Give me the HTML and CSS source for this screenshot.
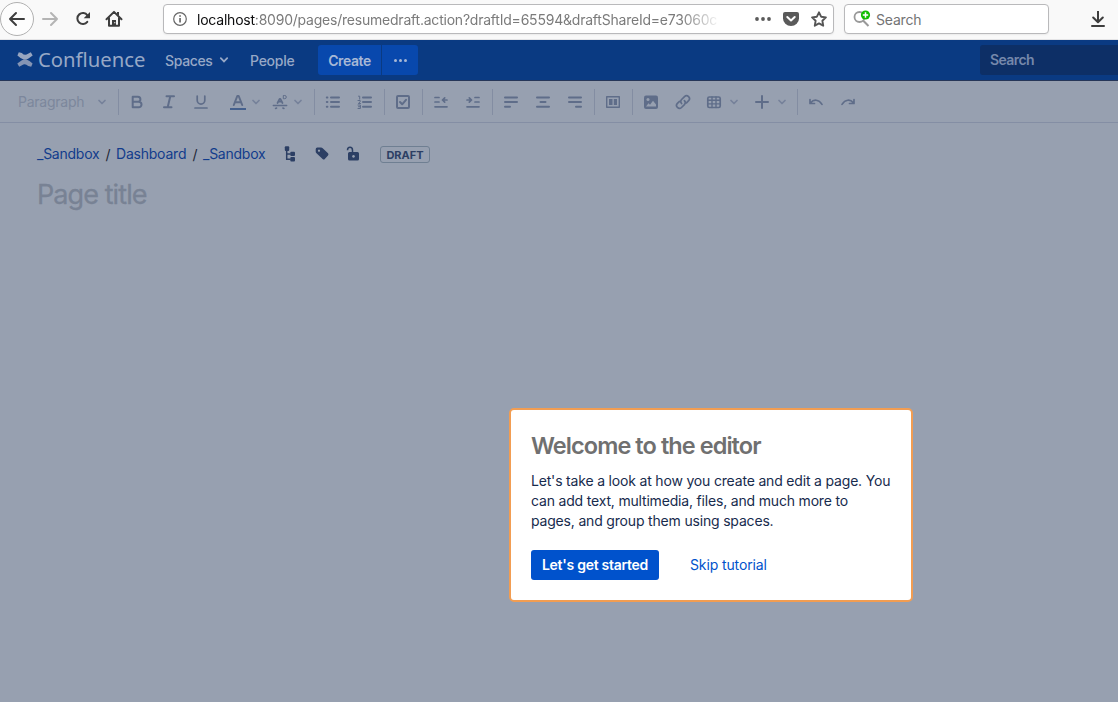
FILE: index.html
```html
<!DOCTYPE html>
<html lang="en">
<head>
<meta charset="utf-8">
<title>Confluence</title>
<link rel="stylesheet" href="styles.css">
</head>
<body>
<div class="browser">
  <span class="back"><svg width="18" height="18" viewBox="0 0 18 18"><path d="M8 3L2 9l6 6M2 9h14" class="b2"/></svg></span>
  <svg class="forward" width="18" height="18" viewBox="0 0 18 18"><path d="M10 3l6 6-6 6M16 9H2"/></svg>
  <svg class="reload" width="16" height="16" viewBox="0 0 16 16"><path d="M12.400 4.400A5.500 5.500 0 1 0 12.300 10.800" class="b2"/><path d="M15 1v6.300H8.700z" fill="#3e3e3e"/></svg>
  <svg class="home" width="18" height="18" viewBox="0 0 18 18"><path d="M1.500 9.200L9 1.900l7.500 7.300M4 8v7.800h10V8" class="b2"/><path d="M12 2h2v4l-2-2zM7 10h4v5H7z" fill="#3e3e3e"/><path d="M9.300 12h1v1.200h-1z" fill="#f9f9f9"/></svg>
  <div class="urlbar">
    <svg width="14" height="14" viewBox="0 0 14 14"><circle cx="7" cy="7" r="6.300" fill="none" stroke="#666" stroke-width="1.200"/><path d="M6.300 6h1.500v4.500H6.300zM6.300 3.300h1.500v1.500H6.300z" fill="#555"/></svg>
    <div class="url"><span class="host">localhost</span>:8090/pages/resumedraft.action?draftId=65594&amp;draftShareId=e73060c</div>
    <svg class="more" width="16" height="16" viewBox="0 0 16 16" fill="#5a5a5a"><circle cx="2" cy="8" r="1.900"/><circle cx="8" cy="8" r="1.900"/><circle cx="14" cy="8" r="1.900"/></svg>
    <svg class="pocket" width="16" height="16" viewBox="0 0 16 16"><path d="M2 1h12q2 0 2 2v4.500a8 7.500 0 0 1-16 0V3q0-2 2-2z" fill="#5a5a5a"/><path d="M4.300 6L8 9.500 11.700 6" fill="none" stroke="#fff" stroke-width="2" stroke-linecap="round" stroke-linejoin="round"/></svg>
    <svg class="star" width="16" height="16" viewBox="0 0 16 16"><path d="M8 1.300l2.100 4.400 4.800.7-3.500 3.400.8 4.900L8 12.400l-4.200 2.300.8-4.900L1.100 6.400l4.800-.7z" fill="none" stroke="#555" stroke-width="1.900" stroke-linejoin="round"/></svg>
  </div>
  <div class="finder">
    <svg width="18" height="18" viewBox="0 0 18 18"><circle cx="6.500" cy="7" r="5" fill="none" stroke="#999" stroke-width="1.800"/><path d="M10.300 10.700l5.200 5.300" stroke="#999" stroke-width="2"/><circle cx="12.500" cy="5" r="4.600" fill="#12bc00"/><path d="M12.500 2.300v5.400M9.800 5h5.400" stroke="#fff" stroke-width="1.500"/></svg>
    <span>Search</span>
  </div>
  <svg class="download" width="14" height="16" viewBox="0 0 14 16"><path d="M7 0v11M2.200 6.500L7 11.300l4.800-4.800M1 15h12" class="b2"/></svg>
</div>

<div class="header">
  <svg class="mark" width="16" height="15" viewBox="0 0 16 15"><path d="M1.800.3L4.800 1Q8 4.300 11 1.700L13.800.3l1.900 3.200Q9.500 8.600 6.500 7.600 3.500 6.500.4 3.600z" fill="#97a5c0"/><path d="M14.200 14.700l-3-.7Q8 10.700 5 13.300l-2.800 1.400L.3 11.500Q6.500 6.400 9.500 7.400q3 1.100 6.100 4z" fill="#8494b4"/></svg>
  <span class="brand">Confluence</span>
  <span class="nav spaces">Spaces</span>
  <svg class="navchev" width="10" height="8" viewBox="0 0 10 8"><path d="M1.800 2.200L5 5.400l3.200-3.200"/></svg>
  <span class="nav people">People</span>
  <span class="create"><b>Create</b></span>
  <span class="dots"><i></i><i></i><i></i></span>
  <span class="quick"><b>Search</b></span>
</div>

<div class="toolbar">
  <div class="para"><span>Paragraph</span><svg class="chev" width="10" height="8" viewBox="0 0 10 8"><path d="M2 2.500l3 3 3-3"/></svg></div>
  <div class="group">
    <span class="tool"><svg class="ic" viewBox="0 0 16 16"><path d="M3.700 2.700h5.200a2.400 2.400 0 0 1 0 5H3.700zM3.700 7.700h6a2.800 2.800 0 0 1 0 5.600h-6z" class="s2"/></svg></span>
    <span class="tool"><svg class="ic" viewBox="0 0 16 16"><path d="M5.500 2.300H13M3 13.300h7.500M9.300 2.300l-2.600 11" class="s2"/></svg></span>
    <span class="tool"><svg class="ic" viewBox="0 0 16 16"><path d="M4.200 2v4.300a3.800 3.800 0 0 0 7.600 0V2M2 14h12" class="s17"/></svg></span>
    <span class="drop color"><svg class="ic" viewBox="0 0 16 16"><path d="M3.800 11L7.300 2h1.400L12.200 11M5 8.200h6" class="s2"/><path d="M0 15h16" stroke="#45608d" stroke-width="2"/></svg><svg class="chev" width="8" height="8" viewBox="0 0 8 8"><path d="M1 2.500l3 3 3-3"/></svg></span>
    <span class="drop fmt"><svg class="ic" viewBox="0 0 16 16"><path d="M5.500 9L7.600 4.800h.8L10.500 9M6.500 7.700h3" class="s17"/><path d="M1.300 11.500h13.400M3.500 14.500l1.200-.5M12 14.500l-1.200-.5" class="s14"/><path d="M11.700 1.500h1a1.500 1.500 0 0 1 0 3.200h-1z" class="s1"/></svg><svg class="chev" width="8" height="8" viewBox="0 0 8 8"><path d="M1 2.500l3 3 3-3"/></svg></span>
  </div>
  <div class="group">
    <span class="tool"><svg class="ic" viewBox="0 0 16 16"><path d="M1.800 3.500h.6M1.800 8h.6M1.800 12.800h.6M6 3.500h8M6 8h8M6 12.800h8" class="s2"/></svg></span>
    <span class="tool"><svg class="ic" viewBox="0 0 16 16"><path d="M6 3.500h8M6 8h8M6 12.800h8" class="s2"/><path d="M1.500 2.200h1.200v3M1 6.500h2.200v1.300L1.300 9.500h2.200M1 11h2.400v3.500H1M1.500 12.700h1.900" class="s1"/></svg></span>
  </div>
  <div class="group">
    <span class="tool"><svg class="ic" viewBox="0 0 16 16"><rect x="2" y="2" width="12" height="12" rx="1" class="s2"/><path d="M5 8l2.200 2.300L11 5.800" class="s2"/></svg></span>
  </div>
  <div class="group">
    <span class="tool"><svg class="ic" viewBox="0 0 16 16"><path d="M2 3.500h4M2 8h4M2 12.800h12M9.500 6H14M11.700 3.900L9.500 6l2.200 2.100" class="s17"/></svg></span>
    <span class="tool"><svg class="ic" viewBox="0 0 16 16"><path d="M10 3.500h4M10 8h4M2 12.800h12M2 6h4.500M4.300 3.900L6.500 6 4.300 8.100" class="s17"/></svg></span>
  </div>
  <div class="group">
    <span class="tool"><svg class="ic" viewBox="0 0 16 16"><path d="M2 3.500h12M2 8h12M2 12.800h5" class="s2"/></svg></span>
    <span class="tool"><svg class="ic" viewBox="0 0 16 16"><path d="M2 3.500h12M5.500 8h5M2 12.800h12" class="s2"/></svg></span>
    <span class="tool"><svg class="ic" viewBox="0 0 16 16"><path d="M2 3.500h12M2 8h12M9 12.800h5" class="s2"/></svg></span>
  </div>
  <div class="group">
    <span class="tool"><svg class="ic" viewBox="0 0 16 16"><rect x="1.700" y="2.700" width="12.600" height="10.600" class="s14"/><path d="M4 5h3.500v6H4zM8.800 5H12v6H8.800z" class="f"/></svg></span>
  </div>
  <div class="group">
    <span class="tool"><svg class="ic" viewBox="0 0 16 16"><rect x="1" y="1.500" width="14" height="13.500" rx="2" class="f"/><circle cx="5" cy="5.500" r="1.500" class="hole"/><path d="M3 12.500l2.500-3.200 1.500 1.500 3-4 3 3.700v2z" class="hole"/></svg></span>
    <span class="tool"><svg class="ic" viewBox="0 0 16 16"><path d="M6.600 9.500a3 3 0 0 1 0-4L9.500 2.600a2.900 2.900 0 0 1 4.100 4.100L11.500 8.800M9.400 6.600a3 3 0 0 1 0 4L6.500 13.500a2.900 2.900 0 0 1-4.100-4.100L4.500 7.300" class="s17"/></svg></span>
    <span class="drop table"><svg class="ic" viewBox="0 0 16 16"><rect x="1.800" y="3" width="12.400" height="10.500" rx="1.500" class="s17"/><path d="M2 6.300h12M2 9.900h12M6 3v10.500M10 3v10.500" class="s14"/></svg><svg class="chev" width="8" height="8" viewBox="0 0 8 8"><path d="M1 2.500l3 3 3-3"/></svg></span>
    <span class="drop plus"><svg class="ic" viewBox="0 0 16 16"><path d="M8 2v12M2 8h12" class="s2"/></svg><svg class="chev" width="8" height="8" viewBox="0 0 8 8"><path d="M1 2.500l3 3 3-3"/></svg></span>
  </div>
  <div class="group">
    <span class="tool"><svg class="ic" viewBox="0 0 16 16"><path d="M2.700 8.700c3-3.600 8-3.500 11.300 1.700M2 5.500v4h4.500" class="s17"/></svg></span>
    <span class="tool"><svg class="ic" viewBox="0 0 16 16"><path d="M13.300 8.700C10.300 5.100 5.300 5.200 2 10.400M14 5.500v4H9.500" class="s17"/></svg></span>
  </div>
</div>

<div class="page">
  <div class="crumbs">
    <a>_Sandbox</a><span class="slash">/</span><a>Dashboard</a><span class="slash">/</span><a>_Sandbox</a>
    <svg class="tree" width="16" height="16" viewBox="0 0 16 16"><rect x="2.800" y=".3" width="4.400" height="4.700" rx="1"/><rect x="8.300" y="5.700" width="4.700" height="4.400" rx="1"/><rect x="8.300" y="11" width="4.700" height="4.400" rx="1"/><path d="M4.700 4v9.300h4M4.700 8h4" class="line"/></svg>
    <svg class="tag" width="16" height="16" viewBox="0 0 16 16"><path fill-rule="evenodd" d="M3.300 1.500H7q1 0 1.700.7l5.300 5q1 1 0 2.200l-3.200 3.500q-1 1-2.200 0L2.500 7.200q-.8-.7-.8-1.700V3.200q0-1.700 1.600-1.700zM5 3.500a1.100 1.100 0 1 0 .01 0z"/></svg>
    <svg class="lock" width="16" height="16" viewBox="0 0 16 16"><path fill-rule="evenodd" d="M4.500 6h8q1.500 0 1.500 1.500V13q0 1.500-1.500 1.500h-8Q3 14.500 3 13V7.500Q3 6 4.500 6zM8.500 9a1.400 1.400 0 1 0 .01 0z"/><path d="M2.500 4.200c0-4 5-4 5 0v3" class="line"/></svg>
    <span class="draft">DRAFT</span>
  </div>
  <div class="title">Page title</div>
</div>

<div class="dialog">
  <h2>Welcome to the editor</h2>
  <p>Let's take a look at how you create and edit a page. You<br>can add text, multimedia, files, and much more to<br>pages, and group them using spaces.</p>
  <div class="actions"><span class="start"><b>Let's get started</b></span><a class="skip">Skip tutorial</a></div>
</div>
</body>
</html>
```
FILE: styles.css
```css
* { box-sizing: border-box; }
body { margin: 0; width: 1118px; height: 702px; overflow: hidden; background: #97a0b0; font-family: Inter, "Liberation Sans", sans-serif; font-size: 14px; color: #172b4d; }
svg { display: block; flex: none; }
span, a { white-space: nowrap; }
b { font-weight: inherit; }

.browser { display: flex; align-items: center; height: 40px; padding-bottom: 2px; background: #f9f9f9; border-bottom: 1px solid #e4e4e6; }
.b2 { fill: none; stroke: #3e3e3e; stroke-width: 2; stroke-linecap: round; stroke-linejoin: round; }
.back { display: flex; align-items: center; justify-content: center; width: 34px; height: 34px; border: 1px solid #b1b1b1; border-radius: 50%; background: #fdfdfd; }
.forward { margin-left: 7px; fill: none; stroke: #b4b4b4; stroke-width: 2; stroke-linecap: round; stroke-linejoin: round; }
.reload { margin-left: 16px; }
.home { margin-left: 14px; }
.urlbar, .finder { display: flex; align-items: center; height: 30px; border: 1px solid #b9b9bb; border-radius: 4px; background: #fff; box-shadow: 0 1px 2px rgba(0,0,0,.06); }
.urlbar { width: 671px; margin-left: 40px; padding-left: 9px; }
.url { width: 530px; margin-left: 10px; padding-top: 1px; white-space: nowrap; color: #7b7b7b; letter-spacing: -.22px; -webkit-mask-image: linear-gradient(90deg, #000 484px, transparent 524px); mask-image: linear-gradient(90deg, #000 484px, transparent 524px); }
.host { color: #0c0c0d; }
.more { margin-left: 28px; }
.pocket { margin-left: 12px; }
.star { margin-left: 12px; }
.finder { width: 205px; margin-left: 10px; padding-left: 8px; color: #737373; }
.finder span { margin-left: 5px; padding-top: 2px; letter-spacing: -.2px; }
.download { margin-left: 42px; }

.header { display: flex; align-items: center; height: 41px; padding-left: 17px; background: #0a3a82; border-bottom: 1px solid #263658; color: #97a8c6; }
.mark { margin-bottom: 1px; }
.brand { width: 108px; margin-left: 5px; font-family: "Noto Sans", sans-serif; font-size: 20.300px; line-height: 24px; padding-bottom: 3px; }
.nav { font-weight: 500; padding-top: 1px; }
.spaces { width: 49px; margin-left: 19px; letter-spacing: -.35px; }
.navchev { margin-left: 5px; fill: none; stroke: #97a8c6; stroke-width: 1.800; stroke-linecap: round; }
.people { width: 48px; margin-left: 21px; letter-spacing: -.25px; }
.create { display: flex; align-items: center; justify-content: center; width: 63px; height: 30px; margin-left: 20px; border-radius: 3px 0 0 3px; background: #0848ad; color: #a7b8d6; font-weight: 600; letter-spacing: -.4px; }
.dots { display: flex; align-items: center; justify-content: center; gap: 2px; width: 36px; height: 30px; margin-left: 1px; border-radius: 0 3px 3px 0; background: #0848ad; }
.dots i { width: 3px; height: 3px; border-radius: 50%; background: #a7b8d6; }
.quick { display: flex; align-items: center; flex: 1; height: 30px; margin-left: 562px; padding: 0 0 1px 10px; border-radius: 3px 0 0 3px; background: #0d2f66; color: #7588ab; font-weight: 600; letter-spacing: -.6px; }

.toolbar { display: flex; align-items: center; height: 42px; border-bottom: 1px solid #848ea4; }
.para { display: flex; align-items: center; width: 118px; padding-left: 18px; color: #7c879c; letter-spacing: -.25px; }
.para span { width: 67px; }
.para .chev { margin-left: 12px; }
.chev { fill: none; stroke: #76829a; stroke-width: 1.700; stroke-linecap: round; stroke-linejoin: round; }
.group { display: flex; height: 26px; padding: 0 3px 0 2px; border-left: 1px solid #838da2; }
.tool { display: flex; align-items: center; justify-content: center; width: 32px; }
.ic { width: 16px; height: 16px; fill: none; stroke: none; }
.drop { display: flex; align-items: center; width: 47px; }
.color { padding-left: 13px; gap: 6px; }
.fmt { padding-left: 8px; gap: 6px; }
.table { width: 48px; padding-left: 7px; gap: 8px; }
.plus { padding-left: 7px; gap: 8px; }
.s2, .s17, .s14, .s1 { fill: none; stroke: #5f6d89; stroke-linejoin: round; stroke-linecap: round; }
.s2 { stroke-width: 2; }
.s17 { stroke-width: 1.700; }
.s14 { stroke-width: 1.400; }
.s1 { stroke-width: 1; }
.f { fill: #5f6d89; }
.hole { fill: #97a0b0; }

.page { padding: 20px 37px; }
.crumbs { display: flex; align-items: center; height: 22px; color: #1d2636; }
.crumbs a { width: 63px; color: #123c8c; letter-spacing: -.25px; margin-top: -1px; }
.crumbs a:nth-of-type(2) { width: 71px; letter-spacing: -.22px; }
.crumbs svg { fill: #2c3f64; }
.crumbs .line { fill: none; stroke: #2c3f64; stroke-width: 1.500; }
.slash { width: 16px; text-align: center; }
.tree { margin-left: 16px; }
.tag { margin-left: 16px; }
.lock { margin-left: 15px; }
.draft { width: 50px; height: 17px; margin-left: 19px; border: 1px solid #6f7f92; border-radius: 3px; font-size: 11px; line-height: 16px; font-weight: 700; text-align: center; color: #2c3f64; }
.title { margin-top: 13px; font-size: 27px; line-height: 34px; letter-spacing: -.92px; color: #788294; -webkit-text-stroke: .3px #788294; }

.dialog { position: absolute; left: 509px; top: 408px; width: 404px; height: 194px; padding: 22px 18px 0 20px; border: 2px solid #f29d52; border-radius: 5px; background: #fff; }
h2 { margin: 0; font-size: 23.500px; line-height: 28px; font-weight: 600; letter-spacing: -.93px; color: #707070; }
p { margin: 11px 0 19px; line-height: 20px; letter-spacing: -.18px; white-space: nowrap; }
.actions { display: flex; align-items: center; }
.start { display: flex; align-items: center; justify-content: center; width: 128px; height: 30px; padding-bottom: 1px; border-radius: 3px; background: #0052cc; color: #fff; font-weight: 600; letter-spacing: -.27px; }
.skip { margin-left: 31px; padding-bottom: 2px; color: #0052cc; letter-spacing: -.12px; }
```
